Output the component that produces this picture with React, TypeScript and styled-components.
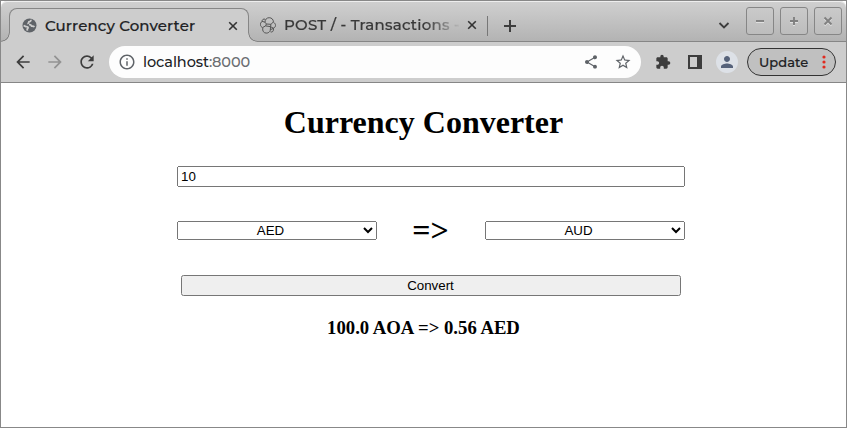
import React from "react";
import styled, { createGlobalStyle, css } from "styled-components";
import {
  MdArrowBack,
  MdArrowForward,
  MdRefresh,
  MdInfoOutline,
  MdShare,
  MdStarBorder,
  MdExtension,
  MdPerson,
} from "react-icons/md";

const LINE = "#868686";
const BAR = "#cdcdcd";

const GlobalStyle = createGlobalStyle`
  * { box-sizing: border-box; }
  html, body { margin: 0; padding: 0; background: #fff; overflow: hidden; }
`;

const Window = styled.div`
  width: 847px;
  height: 428px;
  display: flex;
  flex-direction: column;
  border: 1px solid #888;
  background: #fff;
  font-family: Montserrat, Inter, sans-serif;
  font-weight: 500;
`;

const TabStrip = styled.header`
  height: 41px;
  flex: none;
  display: flex;
  align-items: flex-start;
  padding: 7px 4px 0 8px;
  border-bottom: 1px solid ${LINE};
  border-radius: 6px 6px 0 0;
  background: linear-gradient(#d0d0d0, #b3b3b3);
  box-shadow: inset 0 1px 0 #eee;
`;

const Tab = styled.div<{ $active?: boolean }>`
  position: relative;
  display: flex;
  align-items: center;
  height: 34px;
  width: ${(p) => (p.$active ? 240 : 238)}px;
  padding: ${(p) => (p.$active ? "0 10px 0 12px" : "0 10px 0 11px")};
  color: ${(p) => (p.$active ? "#202123" : "#383838")};
  ${(p) =>
    p.$active &&
    css`
      border: 1px solid ${LINE};
      border-bottom: 0;
      border-radius: 8px 8px 0 0;
      background: ${BAR};
      &::before,
      &::after {
        content: "";
        position: absolute;
        bottom: 0;
        width: 9px;
        height: 9px;
      }
      &::before {
        left: -9px;
        background: radial-gradient(circle at 0 0, transparent 7.4px, ${LINE} 7.9px, ${LINE} 8.4px, ${BAR} 8.9px);
      }
      &::after {
        right: -9px;
        background: radial-gradient(circle at 100% 0, transparent 7.4px, ${LINE} 7.9px, ${LINE} 8.4px, ${BAR} 8.9px);
      }
    `}
`;

const TabTitle = styled.span<{ $fade?: boolean }>`
  flex: 1;
  min-width: 0;
  margin-left: 8px;
  white-space: nowrap;
  font-size: 15px;
  line-height: 20px;
  letter-spacing: ${(p) => (p.$fade ? "0.24px" : "0.13px")};
  -webkit-text-stroke: 0.2px currentColor;
  ${(p) =>
    p.$fade &&
    css`
      mask-image: linear-gradient(90deg, #000 calc(100% - 42px), transparent calc(100% - 6px));
    `}
`;

const Divider = styled.span`
  width: 1px;
  height: 20px;
  margin: 8px 15px 0 0;
  background: #777;
`;

const StripIcon = styled.span<{ $top: number }>`
  display: flex;
  margin-top: ${(p) => p.$top}px;
`;

const StripSpace = styled.span`
  flex: 1;
`;

const WindowButtons = styled.div`
  display: flex;
  gap: 6px;
  margin: -1px 0 0 16px;
`;

const WindowButton = styled.button`
  width: 28px;
  height: 28px;
  padding: 0;
  display: grid;
  place-items: center;
  border: 1px solid ${LINE};
  border-radius: 3px;
  background: linear-gradient(#cacaca, #bdbdbd);
`;

const Toolbar = styled.nav`
  height: 41px;
  flex: none;
  display: flex;
  align-items: center;
  padding: 0 10px 0 12px;
  background: ${BAR};
  border-bottom: 1px solid ${LINE};
`;

const NavIcons = styled.div`
  display: flex;
  gap: 12px;
`;

const NavIcon = styled.span<{ $dim?: boolean }>`
  display: flex;
  font-size: 20px;
  color: ${(p) => (p.$dim ? "#929292" : "#3d3d3d")};
`;

const AddressBar = styled.div`
  width: 532px;
  height: 32px;
  margin-left: 12px;
  padding: 0 9px;
  display: flex;
  align-items: center;
  border-radius: 16px;
  background: #fdfdfd;
  color: #5f6368;
`;

const Address = styled.span`
  flex: 1;
  margin-left: 7px;
  font-size: 14.5px;
  font-weight: 500;
  letter-spacing: -0.08px;
  color: #6b6e72;
  b { font-weight: 500; color: #202124; }
`;

const AddressActions = styled.span`
  display: flex;
  align-items: center;
  gap: 15px;
`;

const Tools = styled.div`
  display: flex;
  align-items: center;
  margin-left: 14px;
  color: #3d3d3d;
`;

const PanelIcon = styled.svg`
  width: 14px;
  height: 14px;
  margin-left: 17px;
`;

const Avatar = styled.span`
  width: 22px;
  height: 22px;
  margin: 0 9px 0 14px;
  display: grid;
  place-items: center;
  border-radius: 50%;
  background: #dde1e7;
  color: #56627a;
`;

const UpdateButton = styled.button`
  width: 89px;
  height: 28px;
  padding: 0 9px 0 11px;
  display: flex;
  align-items: center;
  justify-content: space-between;
  border: 1px solid #333;
  border-radius: 14px;
  background: #c0c0c0;
  color: #202123;
  font: 500 13px/20px Montserrat, Inter, sans-serif;
  letter-spacing: 0.05px;
  -webkit-text-stroke: 0.2px currentColor;
`;

const Page = styled.main`
  flex: 1;
  display: flex;
  flex-direction: column;
  align-items: center;
  color: #000;
  font-family: "Liberation Serif", serif;
`;

const Heading = styled.h1`
  margin: 21px 0 25px;
  font-size: 32px;
  line-height: 37px;
`;

const control = css`
  margin: 0;
  font: 13.333px "Liberation Sans", Arial, sans-serif;
`;

const Amount = styled.input`
  ${control}
  width: 508px;
  height: 21px;
  margin-left: 15px;
`;

const CurrencyRow = styled.div`
  width: 508px;
  height: 37px;
  margin: 25px 0 26px 15px;
  display: flex;
  align-items: center;
  justify-content: space-between;
`;

const Currency = styled.select`
  ${control}
  width: 200px;
  height: 19px;
  padding-right: 1px;
  text-align: center;
`;

const Arrow = styled.span`
  margin-right: 1px;
  font-size: 32px;
  font-weight: bold;
  line-height: 37px;
`;

const Convert = styled.button`
  ${control}
  width: 500px;
  height: 21px;
  margin-left: 15px;
  padding: 1px 7px 1px 6px;
`;

const Result = styled.h3`
  margin: 21px 0 0;
  font-size: 18.72px;
  line-height: 21px;
`;

const Globe = () => (
  <svg width="15" height="15" viewBox="0 0 15 15">
    <circle cx="7.5" cy="7.5" r="7" fill="#5f6368" />
    <path
      d="M8.8 1.8c.5 1.3-.6 1.7-1.9 2.1.1 1.5-.6 1.6-1.6 1.7M7 6.6c1.7-.3 2.3.6 2.6 1.6.9-.1 2.2.1 2.9.7M1.6 7.4l2.2 1.2c1 .1 2.4 0 2.4 1.2l-1.1 1.4.5 1.4"
      fill="none"
      stroke={BAR}
      strokeWidth="1.7"
    />
  </svg>
);

const Cluster = () => (
  <svg width="16" height="17" viewBox="0 0 16 17" fill="none" stroke="#555" strokeWidth="1" strokeLinejoin="round">
    <path d="M5 5.2C5 2.4 6.8.7 9.2.7c2.5 0 4.2 1.8 4.2 4.2L11 7.3 6.4 7z" />
    <path d="M5.1 2.2C3.5 1.6 2 2.7 2 4.3l3 .9M2 4.5C-.3 6-.1 9.7 2.6 10.5L5.6 8.9 6.4 7M13.4 5.2c2.9 1.7 2.8 5-.1 6l-2.8-1.6.5-2.3M2.8 10.8c-.7 3.2 1 5.3 3.5 5.3 2 0 3.3-1 4-2.8l.2-3.7-4.9-.7M10.5 14.8c1.7.8 3.3-.4 3-3.5l-3.1 1.4" />
  </svg>
);

const Cross = () => (
  <svg width="10" height="10" viewBox="0 0 10 10" fill="none" stroke="#333" strokeWidth="1.6">
    <path d="M1.2 1.2l7.6 7.6M8.8 1.2L1.2 8.8" />
  </svg>
);

const glyphs = {
  minus: "M1 5h8",
  plus: "M1 5h8M5 1v8",
  close: "M1.5 1.5l7 7M8.5 1.5l-7 7",
};

const WindowGlyph = ({ kind }: { kind: keyof typeof glyphs }) => (
  <svg width="10" height="11" viewBox="0 0 10 11" fill="none" strokeWidth="1.9">
    <path d={glyphs[kind]} stroke="#e2e2e2" transform="translate(0 1)" />
    <path d={glyphs[kind]} stroke="#808080" />
  </svg>
);

export default function App() {
  return (
    <>
      <GlobalStyle />
      <Window>
        <TabStrip>
          <Tab $active>
            <Globe />
            <TabTitle>Currency Converter</TabTitle>
            <Cross />
          </Tab>
          <Tab>
            <Cluster />
            <TabTitle $fade>POST / - Transactions -</TabTitle>
            <Cross />
          </Tab>
          <Divider />
          <StripIcon $top={11}>
            <svg width="14" height="14" viewBox="0 0 14 14" stroke="#3d3d3d" strokeWidth="2">
              <path d="M7 1v12M1 7h12" />
            </svg>
          </StripIcon>
          <StripSpace />
          <StripIcon $top={14}>
            <svg width="12" height="8" viewBox="0 0 12 8" fill="none" stroke="#3d3d3d" strokeWidth="1.8">
              <path d="M1.5 1L6 5.5 10.5 1" />
            </svg>
          </StripIcon>
          <WindowButtons>
            <WindowButton aria-label="Minimize"><WindowGlyph kind="minus" /></WindowButton>
            <WindowButton aria-label="Maximize"><WindowGlyph kind="plus" /></WindowButton>
            <WindowButton aria-label="Close"><WindowGlyph kind="close" /></WindowButton>
          </WindowButtons>
        </TabStrip>
        <Toolbar>
          <NavIcons>
            <NavIcon><MdArrowBack /></NavIcon>
            <NavIcon $dim><MdArrowForward /></NavIcon>
            <NavIcon><MdRefresh /></NavIcon>
          </NavIcons>
          <AddressBar>
            <MdInfoOutline size={18} />
            <Address><b>localhost</b>:8000</Address>
            <AddressActions>
              <MdShare size={16} />
              <MdStarBorder size={18} />
            </AddressActions>
          </AddressBar>
          <Tools>
            <MdExtension size={16} />
            <PanelIcon viewBox="0 0 14 14">
              <path d="M1 1h12v12H1z" fill="none" stroke="#3d3d3d" strokeWidth="2" />
              <path d="M9 1h4v12H9z" fill="#3d3d3d" />
            </PanelIcon>
            <Avatar><MdPerson size={18} /></Avatar>
            <UpdateButton>
              Update
              <svg width="4" height="14" viewBox="0 0 4 14" fill="#e02a1f">
                <circle cx="2" cy="2" r="1.6" />
                <circle cx="2" cy="7" r="1.6" />
                <circle cx="2" cy="12" r="1.6" />
              </svg>
            </UpdateButton>
          </Tools>
        </Toolbar>
        <Page>
          <Heading>Currency Converter</Heading>
          <Amount defaultValue="10" />
          <CurrencyRow>
            <Currency defaultValue="AED"><option>AED</option><option>AUD</option></Currency>
            <Arrow>=&gt;</Arrow>
            <Currency defaultValue="AUD"><option>AED</option><option>AUD</option></Currency>
          </CurrencyRow>
          <Convert>Convert</Convert>
          <Result>100.0 AOA =&gt; 0.56 AED</Result>
        </Page>
      </Window>
    </>
  );
}
